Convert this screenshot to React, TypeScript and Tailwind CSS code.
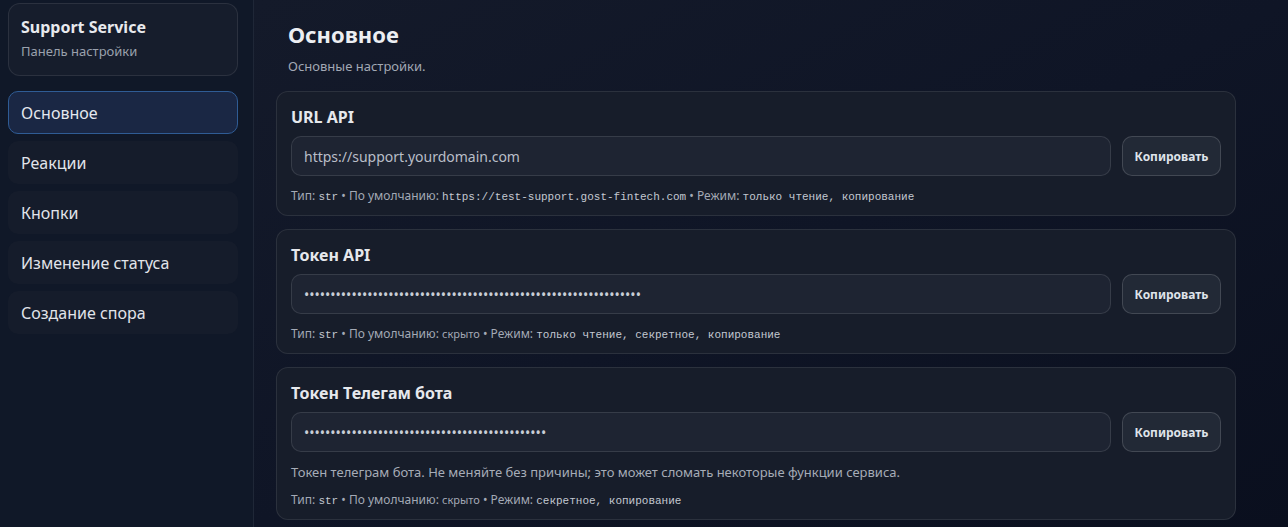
import React from "react";

const navItems = ["Основное", "Реакции", "Кнопки", "Изменение статуса", "Создание спора"];

function Meta({ children }: { children: React.ReactNode }) {
  return <div className="text-[12px] leading-4 text-[#a3a9b5]">{children}</div>;
}

function Mono({ children }: { children: React.ReactNode }) {
  return <span className="font-['Liberation_Mono',monospace] text-[11px] text-[#c3c8d1]">{children}</span>;
}

function Field({ value, secret, dots }: { value?: string; secret?: boolean; dots?: number }) {
  return (
    <div className="flex gap-[11px]">
      <div className="flex h-10 flex-1 items-center rounded-[10px] border border-[#ffffff1c] bg-[#1e2432] px-3">
        {secret ? (
          <span className="text-[14px] text-[#c9ced6]">{"•".repeat(dots || 0)}</span>
        ) : (
          <span className="text-[14px] text-[#b9bec8]">{value}</span>
        )}
      </div>
      <button className="h-10 w-[99px] rounded-[10px] border border-[#ffffff26] bg-[#222936] pt-px text-[12px] font-bold text-[#dfe3ea]">
        Копировать
      </button>
    </div>
  );
}

export default function App() {
  return (
    <div className="flex h-[527px] w-full overflow-hidden bg-[#0d1322] font-['Noto_Sans',sans-serif] text-[#e5e7eb]">
      <aside className="flex w-[254px] shrink-0 flex-col border-r border-[#1f2737] bg-[#101828] pl-2 pr-[15px] pt-[3px]">
        <div className="rounded-xl border border-[#ffffff17] bg-[#161d2c] px-3 pb-[14px] pt-[11px]">
          <div className="text-[16px] font-bold leading-6 text-[#e8eaee]">Support Service</div>
          <div className="mt-[2px] text-[13px] leading-5 text-[#9aa1ad]">Панель настройки</div>
        </div>
        <nav className="mt-[15px] flex flex-col gap-[7px]">
          {navItems.map((item, i) => (
            <div
              key={item}
              className={
                i === 0
                  ? "flex h-[43px] items-center rounded-[10px] border border-[#2f5c95] bg-[#1a2744] px-3 text-[16px] text-[#e4e8ef]"
                  : "flex h-[43px] items-center rounded-[10px] border border-transparent bg-[#151c2b] px-3 text-[16px] text-[#e1e4ea]"
              }
            >
              {item}
            </div>
          ))}
        </nav>
      </aside>
      <main className="flex-1 bg-gradient-to-br from-[#141a2a] via-[#0f1526] to-[#0a0f1e] pl-[22px] pt-[19px]">
        <div className="px-3">
          <h1 className="text-[22px] font-bold leading-[30px] text-[#eceef2]">Основное</h1>
          <p className="mt-[7px] text-[13px] leading-5 text-[#a2a8b4]">Основные настройки.</p>
        </div>
        <div className="mt-[15px] flex w-[960px] flex-col gap-[13px]">
          <section className="rounded-xl border border-[#ffffff17] bg-[#171d2a] px-[14px] pb-[10px] pt-[13px]">
            <h2 className="text-[16px] font-bold leading-6 text-[#e6e8ec]">URL API</h2>
            <div className="mt-[7px]">
              <Field value="https://support.yourdomain.com" />
            </div>
            <div className="mt-[12px]">
              <Meta>
                Тип: <Mono>str</Mono> • По умолчанию: <Mono>https://test-support.gost-fintech.com</Mono> • Режим:{" "}
                <Mono>только чтение, копирование</Mono>
              </Meta>
            </div>
          </section>
          <section className="rounded-xl border border-[#ffffff17] bg-[#171d2a] px-[14px] pb-[10px] pt-[13px]">
            <h2 className="text-[16px] font-bold leading-6 text-[#e6e8ec]">Токен API</h2>
            <div className="mt-[7px]">
              <Field secret dots={64} />
            </div>
            <div className="mt-[12px]">
              <Meta>
                Тип: <Mono>str</Mono> • По умолчанию: <span className="text-[11px]">скрыто</span> • Режим:{" "}
                <Mono>только чтение, секретное, копирование</Mono>
              </Meta>
            </div>
          </section>
          <section className="rounded-xl border border-[#ffffff17] bg-[#171d2a] px-[14px] pb-[10px] pt-[13px]">
            <h2 className="text-[16px] font-bold leading-6 text-[#e6e8ec]">Токен Телегам бота</h2>
            <div className="mt-[7px]">
              <Field secret dots={46} />
            </div>
            <p className="mt-[10px] text-[13px] leading-5 text-[#a6acb7]">
              Токен телеграм бота. Не меняйте без причины; это может сломать некоторые функции сервиса.
            </p>
            <div className="mt-[10px]">
              <Meta>
                Тип: <Mono>str</Mono> • По умолчанию: <span className="text-[11px]">скрыто</span> • Режим:{" "}
                <Mono>секретное, копирование</Mono>
              </Meta>
            </div>
          </section>
        </div>
      </main>
    </div>
  );
}
